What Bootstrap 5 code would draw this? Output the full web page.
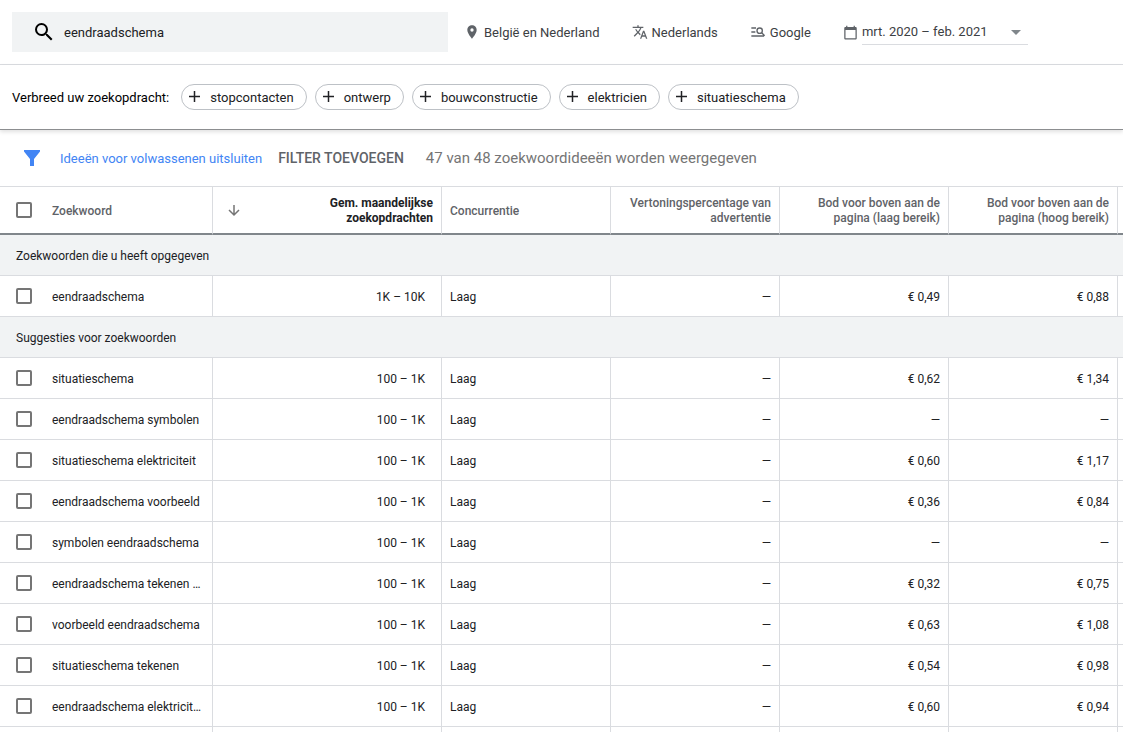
<!DOCTYPE html>
<html lang="nl">
<head>
<meta charset="utf-8">
<meta name="viewport" content="width=device-width, initial-scale=1">
<title>Zoekwoordplanner</title>
<link href="https://cdn.jsdelivr.net/npm/bootstrap@5.3.0/dist/css/bootstrap.min.css" rel="stylesheet">
<style>
  body { font: 400 13px/20px Roboto, "Liberation Sans", sans-serif; color: #202124; background: #fff; }
  svg { flex: none; display: block; }
  button { font-family: inherit; }

  /* Search bar and targeting settings */
  .planner-top { height: 65px; border-bottom: 1px solid #dadce0; padding-left: 12px; }
  .search-field { width: 436px; height: 40px; background: #f1f3f4; padding-left: 20px; gap: 8px; color: #000; }
  .search-field .form-control { font-size: 13px; line-height: 20px; color: #202124; }
  .search-field .form-control, .setting span, .planner-broaden span, .filter-link, .kw-label span { padding-top: 2px !important; }
  .setting { display: flex; align-items: center; border: 0; background: none; padding: 0; color: #3c4043; white-space: nowrap; }
  .setting svg { color: #5f6368; }
  .period { width: 166px; height: 25px; border-bottom: 1px solid #dadce0; justify-content: space-between; padding: 0 4px 2px 0; }

  /* Broaden-search chips */
  .planner-broaden { height: 65px; padding-left: 12px; border-bottom: 1px solid #8c8e90; box-shadow: 0 2px 4px rgba(0, 0, 0, .12); color: #000; }
  .chip { display: flex; align-items: center; height: 26px; gap: 10px; padding: 0 12px 0 6px; border: 1px solid #bdc1c6; border-radius: 13px; background: #fff; color: #202124; white-space: nowrap; }

  /* Filter row */
  .planner-filter { height: 56px; padding-left: 20px; }
  .filter-link { color: #4285f4; text-decoration: none; }
  .filter-add { border: 0; background: none; padding: 0; font-size: 14px; font-weight: 500; color: #5f6368; }
  .filter-count { font-size: 15px; color: #757575; margin-left: 22px; }

  /* Keyword table */
  .kw-table { table-layout: fixed; width: 100%; border-collapse: separate; border-spacing: 0; font-size: 12px; line-height: 15px; }
  .kw-table th, .kw-table td { padding: 2px 8px 0; border-right: 1px solid #dadce0; border-bottom: 1px solid #dadce0; vertical-align: middle; }
  .kw-table tr > :last-child { border-right: 0; }
  .kw-table thead th { height: 49px; border-top: 1px solid #dadce0; border-bottom: 2px solid #80868b; font-weight: 500; color: #5f6368; }
  .kw-table tbody td, .kw-table tbody th { height: 41px; font-weight: 400; }
  .kw-table tbody .group-title { background: #f1f3f4; padding-left: 16px; }
  .kw-table .kw-cell { padding: 0 8px 0 16px; }
  .kw-table .volume { padding-right: 16px; }
  .kw-table thead .sorted { color: #202124; font-weight: 700; padding-left: 15px; }
  .kw-label { display: flex; align-items: center; gap: 20px; }
  .kw-check.form-check-input { width: 16px; height: 16px; margin: 0; border: 2px solid #757575; border-radius: 2px; flex: none; }
  .col-kw { width: 213px; }
  .col-vol { width: 229px; }
  .col-data { width: 169px; }
</style>
</head>
<body class="vh-100 overflow-hidden">

<header class="planner-top d-flex align-items-center">
  <div class="search-field d-flex align-items-center">
    <svg width="24" height="24" viewBox="0 0 24 24" fill="currentColor"><path d="M15.5 14h-.79l-.28-.27A6.47 6.47 0 0 0 16 9.5 6.5 6.5 0 1 0 9.5 16c1.61 0 3.09-.59 4.23-1.57l.27.28v.79l5 4.99L20.49 19l-4.99-5zm-6 0C7.01 14 5 11.99 5 9.5S7.01 5 9.5 5 14 7.01 14 9.5 11.99 14 9.5 14z"/></svg>
    <input class="form-control border-0 bg-transparent shadow-none p-0" type="text" value="eendraadschema" aria-label="Zoekwoorden">
  </div>
  <button type="button" class="setting ms-3">
    <svg class="me-1" width="16" height="16" viewBox="0 0 24 24" fill="currentColor"><path d="M12 2C8.13 2 5 5.13 5 9c0 5.25 7 13 7 13s7-7.75 7-13c0-3.87-3.13-7-7-7zm0 9.5a2.5 2.5 0 0 1 0-5 2.5 2.5 0 0 1 0 5z"/></svg>
    <span>België en Nederland</span>
  </button>
  <button type="button" class="setting ms-4">
    <svg class="ms-2 me-1" width="16" height="16" viewBox="0 0 24 24" fill="currentColor"><path d="M12.87 15.07l-2.54-2.51.03-.03A17.52 17.52 0 0 0 14.07 6H17V4h-7V2H8v2H1v1.99h11.17C11.5 7.92 10.44 9.75 9 11.35 8.07 10.32 7.3 9.19 6.69 8h-2c.73 1.63 1.73 3.17 2.98 4.56l-5.09 5.02L4 19l5-5 3.11 3.11.76-2.04zM18.5 10h-2L12 22h2l1.12-3h4.75L21 22h2l-4.5-12zm-2.62 7l1.62-4.33L19.12 17h-3.24z"/></svg>
    <span>Nederlands</span>
  </button>
  <button type="button" class="setting ms-4">
    <svg class="ms-2 me-1" width="16" height="16" viewBox="0 0 24 24" fill="none" stroke="currentColor" stroke-width="2"><path d="M2 6h7M2 12h6M2 18h19M17.500 13l4.500 4.500"/><circle cx="14.500" cy="10" r="4"/></svg>
    <span>Google</span>
  </button>
  <div class="d-flex align-items-center ms-4">
    <svg class="ms-2" width="15" height="15" viewBox="0 0 24 24" fill="#5f6368"><path d="M20 3h-1V1h-2v2H7V1H5v2H4c-1.100 0-2 .9-2 2v16c0 1.100.9 2 2 2h16c1.100 0 2-.9 2-2V5c0-1.100-.9-2-2-2zm0 18H4V8h16v13z"/></svg>
    <button type="button" class="setting period ms-1"><span>mrt. 2020 – feb. 2021</span>
      <svg width="16" height="16" viewBox="0 0 16 16" fill="#80868b"><path d="M3 7h10l-5 5z"/></svg>
    </button>
  </div>
</header>

<section class="planner-broaden d-flex align-items-center gap-2 position-relative">
  <span class="me-1">Verbreed uw zoekopdracht:</span>
  <button type="button" class="chip"><svg width="12" height="12" viewBox="0 0 12 12" stroke="#202124" stroke-width="1.500"><path d="M6.500 0v11M1 5.500h11"/></svg><span>stopcontacten</span></button>
  <button type="button" class="chip"><svg width="12" height="12" viewBox="0 0 12 12" stroke="#202124" stroke-width="1.500"><path d="M6.500 0v11M1 5.500h11"/></svg><span>ontwerp</span></button>
  <button type="button" class="chip"><svg width="12" height="12" viewBox="0 0 12 12" stroke="#202124" stroke-width="1.500"><path d="M6.500 0v11M1 5.500h11"/></svg><span>bouwconstructie</span></button>
  <button type="button" class="chip"><svg width="12" height="12" viewBox="0 0 12 12" stroke="#202124" stroke-width="1.500"><path d="M6.500 0v11M1 5.500h11"/></svg><span>elektricien</span></button>
  <button type="button" class="chip"><svg width="12" height="12" viewBox="0 0 12 12" stroke="#202124" stroke-width="1.500"><path d="M6.500 0v11M1 5.500h11"/></svg><span>situatieschema</span></button>
</section>

<main>
  <div class="planner-filter d-flex align-items-center">
    <svg width="24" height="24" viewBox="0 0 24 24" fill="#4285f4"><path d="M4 4h16v1.500L14 13v7h-4v-7L4 5.500z"/></svg>
    <a class="filter-link ms-3" href="#">Ideeën voor volwassenen uitsluiten</a>
    <button type="button" class="filter-add ms-3">FILTER TOEVOEGEN</button>
    <span class="filter-count">47 van 48 zoekwoordideeën worden weergegeven</span>
  </div>

  <table class="kw-table">
    <colgroup><col class="col-kw"><col class="col-vol"><col class="col-data"><col class="col-data"><col class="col-data"><col class="col-data"><col></colgroup>
    <thead>
      <tr>
        <th class="kw-cell" scope="col"><label class="kw-label"><input type="checkbox" class="kw-check form-check-input"><span>Zoekwoord</span></label></th>
        <th class="sorted" scope="col">
          <div class="d-flex align-items-center justify-content-between">
            <svg width="12" height="12" viewBox="0 0 12 12" fill="none" stroke="#757575" stroke-width="1.500"><path d="M6 0v10M1 5l5 5 5-5"/></svg>
            <span class="text-end">Gem. maandelijkse<br>zoekopdrachten</span>
          </div>
        </th>
        <th scope="col">Concurrentie</th>
        <th class="text-end" scope="col">Vertoningspercentage van<br>advertentie</th>
        <th class="text-end" scope="col">Bod voor boven aan de<br>pagina (laag bereik)</th>
        <th class="text-end" scope="col">Bod voor boven aan de<br>pagina (hoog bereik)</th>
        <th class="p-0"></th>
      </tr>
    </thead>
    <tbody>
      <tr><th class="group-title" colspan="7">Zoekwoorden die u heeft opgegeven</th></tr>
      <tr><td class="kw-cell"><label class="kw-label"><input type="checkbox" class="kw-check form-check-input"><span class="text-truncate">eendraadschema</span></label></td><td class="volume text-end">1K – 10K</td><td>Laag</td><td class="text-end">—</td><td class="text-end">€ 0,49</td><td class="text-end">€ 0,88</td><td class="p-0"></td></tr>
      <tr><th class="group-title" colspan="7">Suggesties voor zoekwoorden</th></tr>
      <tr><td class="kw-cell"><label class="kw-label"><input type="checkbox" class="kw-check form-check-input"><span class="text-truncate">situatieschema</span></label></td><td class="volume text-end">100 – 1K</td><td>Laag</td><td class="text-end">—</td><td class="text-end">€ 0,62</td><td class="text-end">€ 1,34</td><td class="p-0"></td></tr>
      <tr><td class="kw-cell"><label class="kw-label"><input type="checkbox" class="kw-check form-check-input"><span class="text-truncate">eendraadschema symbolen</span></label></td><td class="volume text-end">100 – 1K</td><td>Laag</td><td class="text-end">—</td><td class="text-end">—</td><td class="text-end">—</td><td class="p-0"></td></tr>
      <tr><td class="kw-cell"><label class="kw-label"><input type="checkbox" class="kw-check form-check-input"><span class="text-truncate">situatieschema elektriciteit</span></label></td><td class="volume text-end">100 – 1K</td><td>Laag</td><td class="text-end">—</td><td class="text-end">€ 0,60</td><td class="text-end">€ 1,17</td><td class="p-0"></td></tr>
      <tr><td class="kw-cell"><label class="kw-label"><input type="checkbox" class="kw-check form-check-input"><span class="text-truncate">eendraadschema voorbeeld</span></label></td><td class="volume text-end">100 – 1K</td><td>Laag</td><td class="text-end">—</td><td class="text-end">€ 0,36</td><td class="text-end">€ 0,84</td><td class="p-0"></td></tr>
      <tr><td class="kw-cell"><label class="kw-label"><input type="checkbox" class="kw-check form-check-input"><span class="text-truncate">symbolen eendraadschema</span></label></td><td class="volume text-end">100 – 1K</td><td>Laag</td><td class="text-end">—</td><td class="text-end">—</td><td class="text-end">—</td><td class="p-0"></td></tr>
      <tr><td class="kw-cell"><label class="kw-label"><input type="checkbox" class="kw-check form-check-input"><span class="text-truncate">eendraadschema tekenen …</span></label></td><td class="volume text-end">100 – 1K</td><td>Laag</td><td class="text-end">—</td><td class="text-end">€ 0,32</td><td class="text-end">€ 0,75</td><td class="p-0"></td></tr>
      <tr><td class="kw-cell"><label class="kw-label"><input type="checkbox" class="kw-check form-check-input"><span class="text-truncate">voorbeeld eendraadschema</span></label></td><td class="volume text-end">100 – 1K</td><td>Laag</td><td class="text-end">—</td><td class="text-end">€ 0,63</td><td class="text-end">€ 1,08</td><td class="p-0"></td></tr>
      <tr><td class="kw-cell"><label class="kw-label"><input type="checkbox" class="kw-check form-check-input"><span class="text-truncate">situatieschema tekenen</span></label></td><td class="volume text-end">100 – 1K</td><td>Laag</td><td class="text-end">—</td><td class="text-end">€ 0,54</td><td class="text-end">€ 0,98</td><td class="p-0"></td></tr>
      <tr><td class="kw-cell"><label class="kw-label"><input type="checkbox" class="kw-check form-check-input"><span class="text-truncate">eendraadschema elektricit…</span></label></td><td class="volume text-end">100 – 1K</td><td>Laag</td><td class="text-end">—</td><td class="text-end">€ 0,60</td><td class="text-end">€ 0,94</td><td class="p-0"></td></tr>
      <tr><td></td><td></td><td></td><td></td><td></td><td></td><td class="p-0"></td></tr>
    </tbody>
  </table>
</main>

<script src="https://cdn.jsdelivr.net/npm/bootstrap@5.3.0/dist/js/bootstrap.bundle.min.js"></script>
</body>
</html>
